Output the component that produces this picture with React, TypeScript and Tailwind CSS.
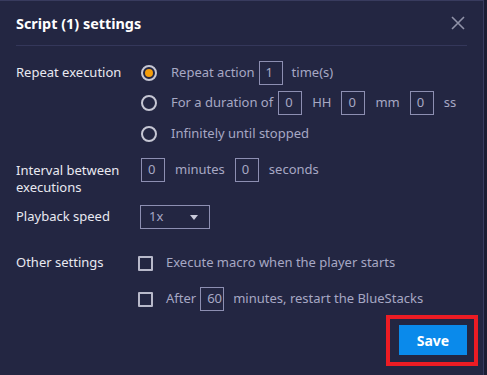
import React from 'react';

const Radio = ({ checked }: { checked?: boolean }) => (
  <span className="w-[16px] h-[16px] rounded-full border-2 border-[#c6c7d4] flex items-center justify-center shrink-0">
    {checked && <span className="w-[8px] h-[8px] rounded-full bg-[#f59e0b]" />}
  </span>
);

const Check = () => <span className="w-[15px] h-[15px] border-2 border-[#b8b9ca] rounded-[1px] shrink-0" />;

const Box = ({ v, className = '' }: { v: string; className?: string }) => (
  <span
    className={`w-[24px] h-[24px] border border-[#8d8fb2] text-[#a7a8c4] flex items-center pl-[6px] shrink-0 ${className}`}
  >
    {v}
  </span>
);

export default function App() {
  return (
    <div className="w-[487px] h-[375px] bg-[#1b1d33] font-['Noto_Sans',sans-serif] text-[13px] overflow-hidden">
      <div className="w-[484px] h-[375px] bg-[#232642] border-t border-r border-[#383b5e] flex flex-col">
        <div className="h-[45px] mx-[16px] border-b border-[#34375a] flex items-center justify-between">
          <h2 className="text-[14.4px] font-bold text-white pt-[2px]">Script (1) settings</h2>
          <svg width="14" height="14" viewBox="0 0 14 14" className="mr-[2px]">
            <path d="M1 1L13 13M13 1L1 13" stroke="#9092a8" strokeWidth="1.6" />
          </svg>
        </div>

        <div className="pl-[16px] pt-[12px] text-[#e9e9f1]">
          <div className="flex">
            <div className="w-[125px] h-[30px] flex items-center">Repeat execution</div>
            <div className="flex flex-col text-[#a7a8c4]">
              <div className="h-[30px] flex items-center">
                <Radio checked />
                <span className="ml-[14px]">Repeat action</span>
                <Box v="1" className="ml-[4px]" />
                <span className="ml-[9px]">time(s)</span>
              </div>
              <div className="h-[30px] flex items-center">
                <Radio />
                <span className="ml-[14px]">For a duration of</span>
                <Box v="0" className="ml-[5px]" />
                <span className="ml-[10px]">HH</span>
                <Box v="0" className="ml-[10px]" />
                <span className="ml-[10px]">mm</span>
                <Box v="0" className="ml-[10px]" />
                <span className="ml-[10px]">ss</span>
              </div>
              <div className="h-[30px] flex items-center pt-[1px]">
                <Radio />
                <span className="ml-[14px]">Infinitely until stopped</span>
              </div>
            </div>
          </div>

          <div className="flex items-start mt-[10px] h-[36px]">
            <div className="w-[125px] leading-[17px] pt-[4px]">
              <div>Interval between</div>
              <div>executions</div>
            </div>
            <div className="flex items-center text-[#a7a8c4]">
              <Box v="0" />
              <span className="ml-[10px]">minutes</span>
              <Box v="0" className="ml-[10px]" />
              <span className="ml-[10px]">seconds</span>
            </div>
          </div>

          <div className="flex items-center mt-[11px] h-[24px]">
            <div className="w-[124px]">Playback speed</div>
            <div className="w-[70px] h-[24px] border border-[#8d8fb2] flex items-center justify-between pl-[8px] pr-[11px] text-[#a7a8c4]">
              <span>1x</span>
              <svg width="8" height="5" viewBox="0 0 8 5">
                <path d="M0 0H8L4 5Z" fill="#c9cada" />
              </svg>
            </div>
          </div>

          <div className="flex items-center mt-[22px] h-[24px]">
            <div className="w-[122px]">Other settings</div>
            <Check />
            <span className="ml-[13px] text-[#a7a8c4]">Execute macro when the player starts</span>
          </div>
          <div className="flex items-center mt-[12px] h-[24px] text-[#a7a8c4]">
            <div className="w-[122px]" />
            <Check />
            <span className="ml-[13px]">After</span>
            <Box v="60" className="ml-[4px] pl-[4px]" />
            <span className="ml-[9px]">minutes, restart the BlueStacks</span>
          </div>
        </div>

        <div className="flex justify-end mt-[4px] mr-[5px]">
          <div className="border-4 border-[#ec1c24] pt-[6px] pb-[7px] pl-[9px] pr-[7px]">
            <button className="w-[68px] h-[30px] bg-[#0a8aeb] text-white font-bold text-[14px]">Save</button>
          </div>
        </div>
      </div>
    </div>
  );
}
